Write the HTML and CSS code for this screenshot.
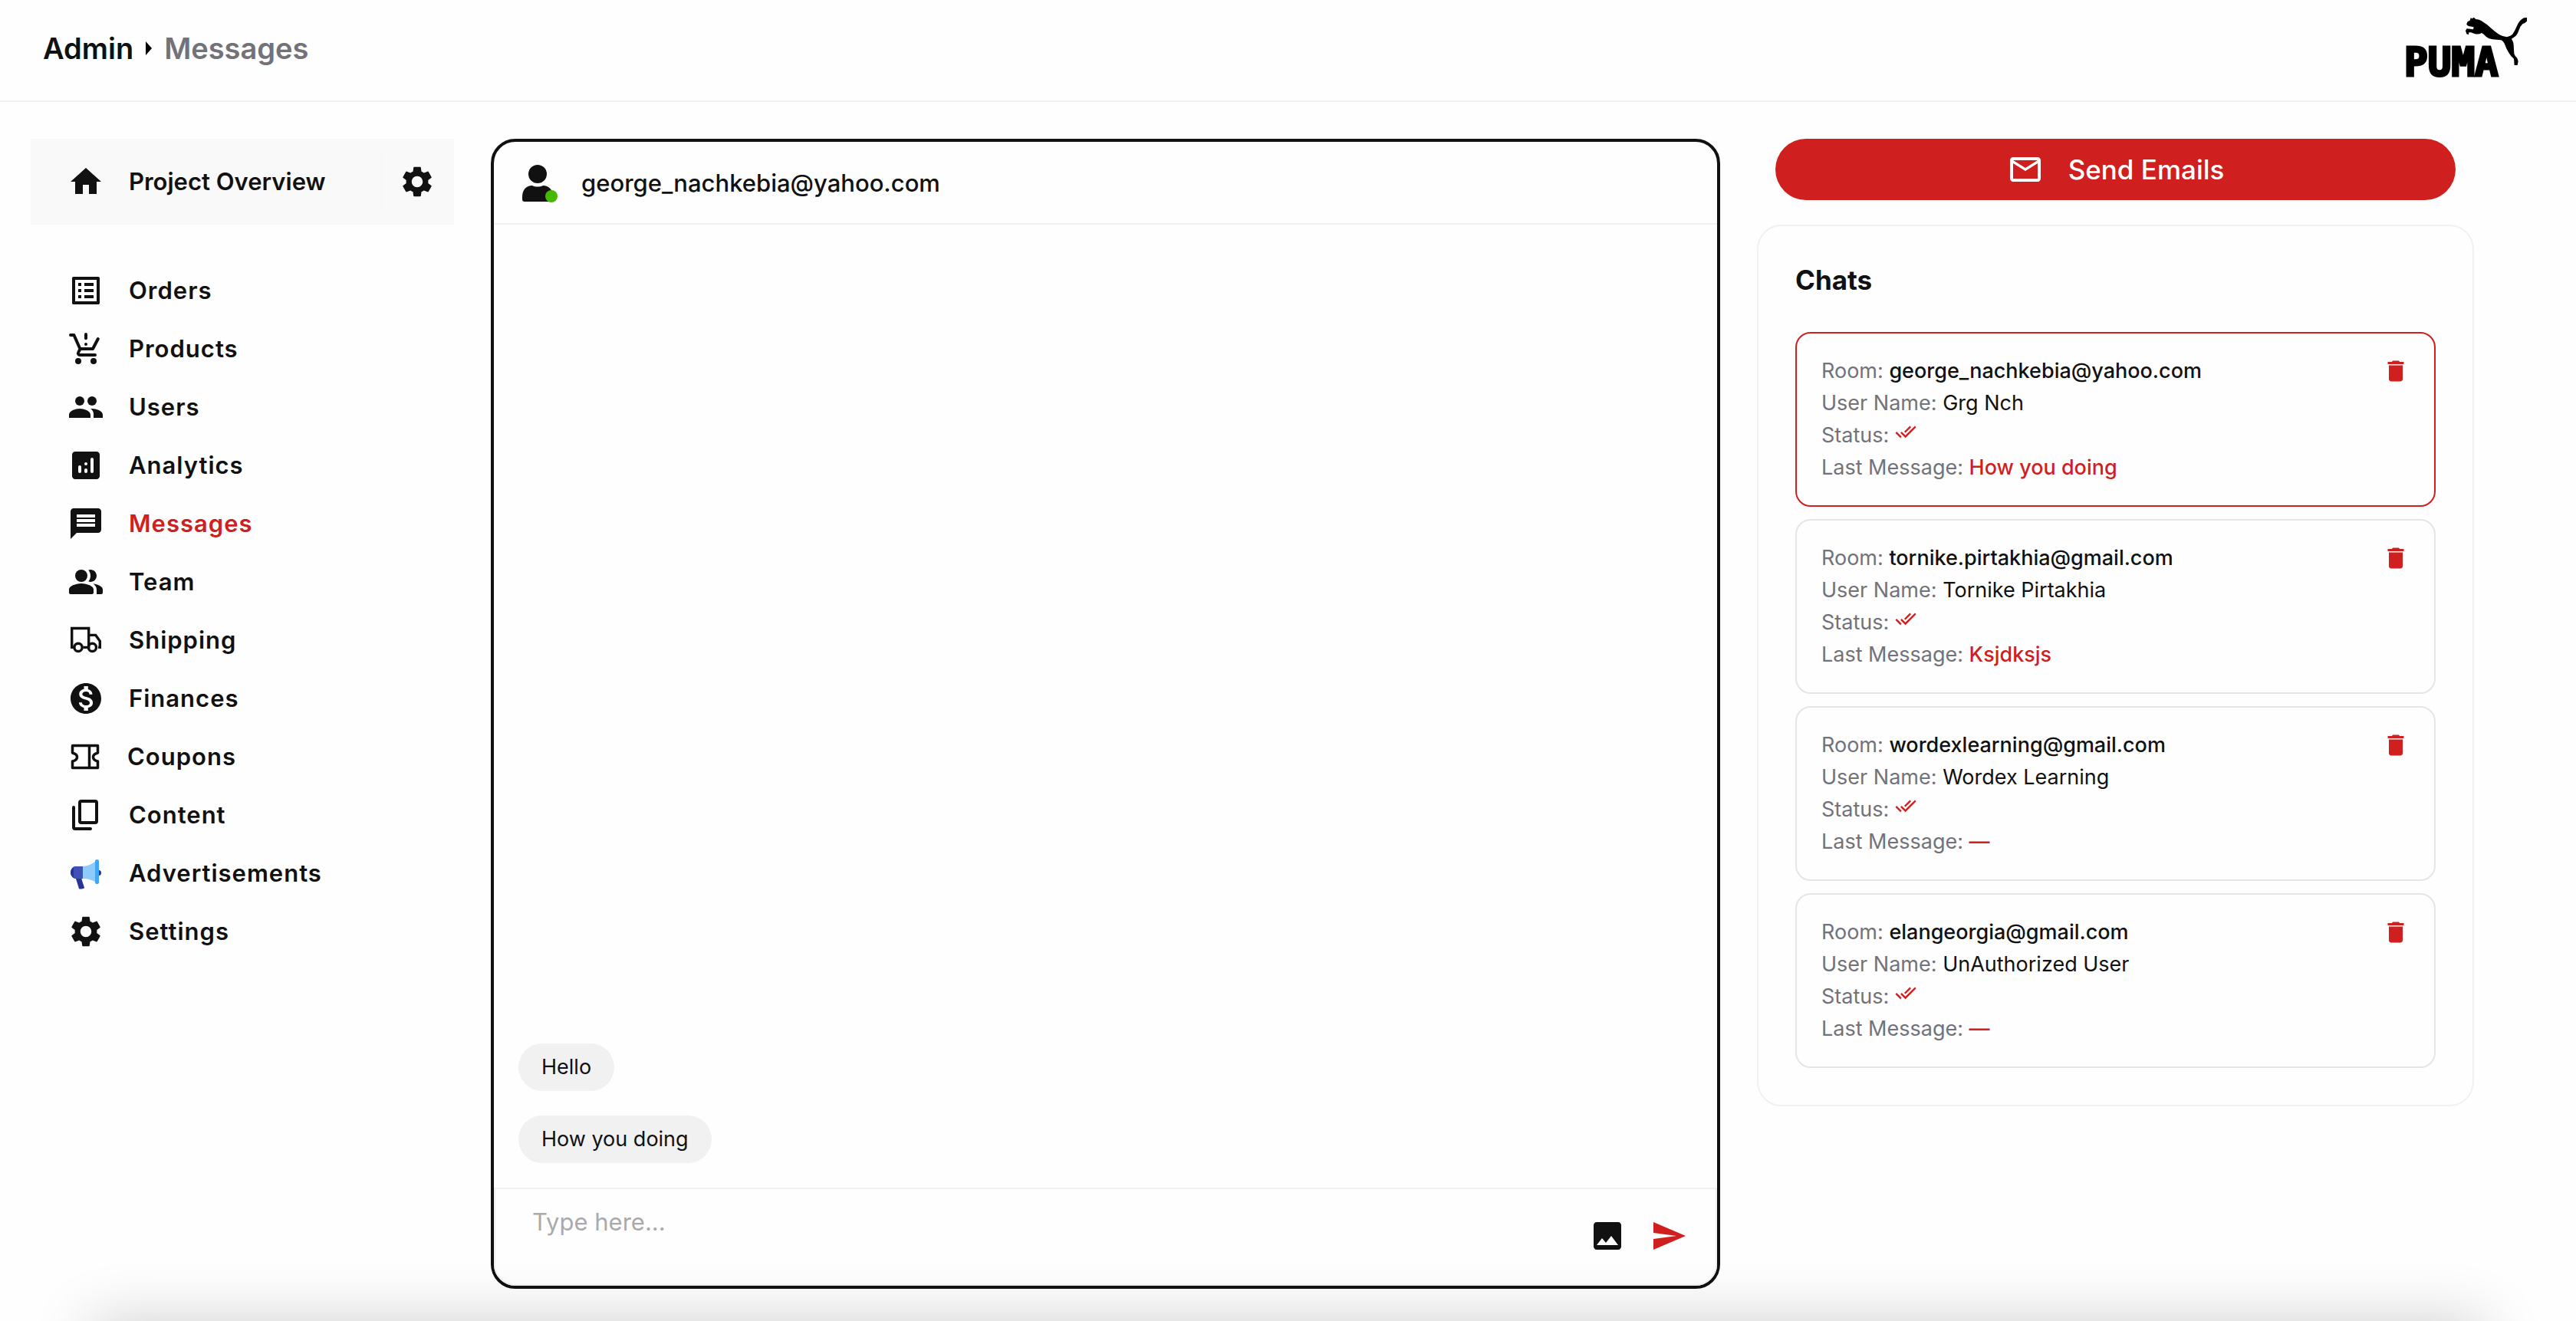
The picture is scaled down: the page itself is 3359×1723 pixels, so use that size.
FILE: index.html
```html
<!DOCTYPE html>
<html lang="en">
<head>
<meta charset="utf-8">
<title>Admin - Messages</title>
<meta name="viewport" content="width=device-width, initial-scale=1">
<link rel="stylesheet" href="styles.css">
</head>
<body>
<svg class="sprite" aria-hidden="true">
  <symbol id="gear" viewBox="0 0 24 24"><path d="M19.14 12.94c.04-.3.06-.61.06-.94 0-.32-.02-.64-.07-.94l2.03-1.58c.18-.14.23-.41.12-.61l-1.92-3.32c-.12-.22-.37-.29-.59-.22l-2.39.96c-.5-.38-1.03-.7-1.62-.94l-.36-2.54c-.04-.24-.24-.41-.48-.41h-3.84c-.24 0-.43.17-.47.41l-.36 2.54c-.59.24-1.13.57-1.62.94l-2.39-.96c-.22-.08-.47 0-.59.22L2.74 8.87c-.12.21-.08.47.12.61l2.03 1.58c-.05.3-.09.63-.09.94s.02.64.07.94l-2.03 1.58c-.18.14-.23.41-.12.61l1.92 3.32c.12.22.37.29.59.22l2.39-.96c.5.38 1.03.7 1.62.94l.36 2.54c.05.24.24.41.48.41h3.84c.24 0 .44-.17.47-.41l.36-2.54c.59-.24 1.13-.56 1.62-.94l2.39.96c.22.08.47 0 .59-.22l1.92-3.32c.12-.22.07-.47-.12-.61l-2.01-1.58zM12 15.6c-1.98 0-3.6-1.62-3.6-3.6s1.62-3.6 3.6-3.6 3.6 1.62 3.6 3.6-1.62 3.6-3.6 3.6z"/></symbol>
  <symbol id="trash" viewBox="0 0 24 24"><path d="M6 19c0 1.1.9 2 2 2h8c1.1 0 2-.9 2-2V7H6v12zM19 4h-3.500l-1-1h-5l-1 1H5v2h14V4z"/></symbol>
  <symbol id="seen" viewBox="0 0 24 24"><path d="M18 7l-1.410-1.410-6.340 6.340 1.410 1.410L18 7zm4.240-1.410L11.660 16.170 7.480 12l-1.410 1.410L11.660 19l12-12-1.420-1.410zM.41 13.410L6 19l1.410-1.410L1.830 12 .41 13.410z"/></symbol>
</svg>

<header class="topbar">
  <nav class="crumbs" aria-label="Breadcrumb">
    <a href="#admin">Admin</a>
    <svg class="caret" viewBox="0 0 8 18" aria-hidden="true"><path d="M0 0l8 9-8 9z"/></svg>
    <span class="crumb-current">Messages</span>
  </nav>
  <a class="brand" href="#home" aria-label="Puma">
    <svg class="logo" viewBox="-6 0 164 94" aria-hidden="true">
      <text class="logo-word" x="-2" y="76">PUMA</text>
      <g transform="translate(63 -8) scale(.3333)">
        <path d="M62 35L65 25L71 28L77 23L85 30Q96 31 105 35Q128 48 150 70Q172 90 190 96L207 100Q222 96 228 90Q238 76 246 56Q254 38 265 30Q274 23 285 24V38Q278 45 268 49Q259 58 254 72Q248 90 240 97L225 107Q232 118 233 130L235 165Q237 174 247 182L251 195L248 210H236L234 185Q222 176 213 160Q204 146 199 130Q193 116 184 112L150 109Q134 107 125 98Q116 88 108 84Q98 90 82 88L66 82H58L57 91L49 88L45 75L50 67L75 70L77 61L60 58Q48 54 49 48L53 40Z"/>
      </g>
    </svg>
  </a>
</header>

<div class="layout">
  <aside class="sidebar">
    <div class="overview">
      <a class="overview-link" href="#overview">
        <svg class="icon" viewBox="0 0 24 24"><path d="M10 20v-6h4v6h5v-8h3L12 3 2 12h3v8z"/></svg>
        <span>Project Overview</span>
      </a>
      <button class="icon-button overview-settings" type="button" aria-label="Project settings"><svg class="icon"><use href="#gear"/></svg></button>
    </div>
    <nav class="menu" aria-label="Main">
      <a href="#orders"><svg class="icon" viewBox="0 0 24 24"><path d="M11 7h6v2h-6zM11 11h6v2h-6zM11 15h6v2h-6zM7 7h2v2H7zM7 11h2v2H7zM7 15h2v2H7z"/><path d="M20.100 3H3.900c-.5 0-.9.4-.9.900v16.200c0 .4.4.900.9.900h16.200c.4 0 .9-.5.9-.9V3.900c0-.5-.5-.9-.9-.9zM19 19H5V5h14v14z"/></svg><span>Orders</span></a>
      <a href="#products"><svg class="icon" viewBox="0 0 24 24"><path d="M12 1.500c.55 0 1 .45 1 1v2.600c0 .55-.45 1-1 1s-1-.45-1-1V2.500c0-.55.45-1 1-1z"/><circle cx="12" cy="9" r="1"/><circle cx="7" cy="20" r="2"/><circle cx="17" cy="20" r="2"/><path d="M2 3h2.200l4 9h8.300l3.400-6.500M8.300 12l-1.200 2.300c-.5.900.1 1.700 1 1.700H18" fill="none" stroke="#111" stroke-width="2" stroke-linecap="round" stroke-linejoin="round"/></svg><span>Products</span></a>
      <a href="#users"><svg class="icon" viewBox="0 0 24 24"><circle cx="8" cy="8" r="3"/><circle cx="16" cy="8" r="3"/><path d="M8 13c-2.700 0-7 1.340-7 4v2h14v-2c0-2.660-4.330-4-7-4zM16 13c-.29 0-.62.02-.97.05C16.190 13.890 17 15.020 17 16.500V19h6v-2c0-2.660-4.330-4-7-4z"/></svg><span>Users</span></a>
      <a href="#analytics"><svg class="icon" viewBox="0 0 24 24"><path fill-rule="evenodd" d="M5 3h14c1.100 0 2 .9 2 2v14c0 1.100-.9 2-2 2H5c-1.100 0-2-.9-2-2V5c0-1.100.9-2 2-2zM8 12a1 1 0 0 0-1 1v3a1 1 0 0 0 2 0v-3a1 1 0 0 0-1-1zM12 10a1 1 0 1 0 0 2 1 1 0 0 0 0-2zM12 14a1 1 0 0 0-1 1v1a1 1 0 0 0 2 0v-1a1 1 0 0 0-1-1zM16 7a1 1 0 0 0-1 1v8a1 1 0 0 0 2 0V8a1 1 0 0 0-1-1z"/></svg><span>Analytics</span></a>
      <a class="active" href="#messages" aria-current="page"><svg class="icon" viewBox="0 0 24 24"><path d="M20 2H4c-1.100 0-2 .9-2 2v18l4-4h14c1.100 0 2-.9 2-2V4c0-1.100-.9-2-2-2zM6 9h12v2H6V9zm12 5H6v-2h12v2zm0-6H6V6h12v2z"/></svg><span>Messages</span></a>
      <a href="#team"><svg class="icon" viewBox="0 0 24 24"><circle cx="9" cy="8" r="4"/><path d="M9 13c-2.670 0-8 1.340-8 4v2c0 .55.45 1 1 1h14c.55 0 1-.45 1-1v-2c0-2.660-5.330-4-8-4zM15 12c2.210 0 4-1.790 4-4s-1.790-4-4-4c-.47 0-.91.1-1.330.24C14.500 5.270 15 6.580 15 8s-.5 2.730-1.330 3.760c.42.14.86.24 1.330.24zM16.670 13.130C18.040 14.060 19 15.320 19 17v3h3c.55 0 1-.45 1-1v-2c0-2.180-3.570-3.470-6.330-3.870z"/></svg><span>Team</span></a>
      <a href="#shipping"><svg class="icon" viewBox="0 0 24 24"><g fill="none" stroke="#111" stroke-width="1.700"><path d="M4 16.700H2.850V4.250h11v12.450H10.200M13.850 8.700h4.500l2.800 4V16.700h-1.100M10.200 16.700h3.700"/><circle cx="7" cy="16.700" r="2.550"/><circle cx="16.200" cy="16.700" r="2.550"/></g></svg><span>Shipping</span></a>
      <a href="#finances"><svg class="icon" viewBox="0 0 24 24"><path d="M12 2C6.480 2 2 6.480 2 12s4.480 10 10 10 10-4.480 10-10S17.520 2 12 2zm1.410 16.090V20h-2.670v-1.930c-1.710-.36-3.160-1.460-3.270-3.400h1.960c.1 1.050.82 1.870 2.650 1.870 1.960 0 2.400-.98 2.400-1.590 0-.83-.44-1.610-2.670-2.140-2.480-.6-4.180-1.620-4.180-3.670 0-1.720 1.390-2.840 3.110-3.210V4h2.670v1.950c1.860.45 2.790 1.860 2.850 3.390H14.300c-.05-1.110-.64-1.870-2.220-1.870-1.500 0-2.400.68-2.400 1.640 0 .84.65 1.390 2.670 1.910s4.180 1.390 4.180 3.910c-.01 1.830-1.380 2.830-3.120 3.160z"/></svg><span>Finances</span></a>
      <a href="#coupons"><svg class="icon icon-ticket" viewBox="0 0 46 48"><g fill="none" stroke="#111" stroke-width="3.500" stroke-linejoin="round"><path d="M6.500 9.500h33v9.500c-4 1-6 3-6 5.500s2 4.500 6 5.500v8.500h-33V30c4-1 6-3 6-5.500S10.500 20 6.500 19zM28.500 9.500v29"/></g></svg><span>Coupons</span></a>
      <a href="#content"><svg class="icon" viewBox="0 0 24 24"><g fill="none" stroke="#111" stroke-width="2" stroke-linecap="round" stroke-linejoin="round"><rect x="8" y="3" width="11" height="14" rx="1"/><path d="M4 7v13c0 .55.45 1 1 1h10"/></g></svg><span>Content</span></a>
      <a href="#advertisements"><svg class="icon" viewBox="0 0 48 48"><path fill="#283593" d="M41 20c2 0 3 1.500 3 3.500S43 27 41 27z"/><path fill="#283593" d="M10 28l5 16c.5 1.200 7.500.2 7-1.300L18.500 32c0-2 1-1 1-3z"/><path fill="#90caf9" d="M19 34v-3c8 0 13 1.500 18 5V8c-5 4-11 7-18 7v16z"/><path fill="#3f51b5" d="M9 15h11v16H9c-3-2-5-4.500-5-8s2-6 5-8z"/><path fill="#283593" d="M8 15.800C5.500 17.500 4 20 4 23s1.500 5.500 4 7.200z"/><path fill="#42a5f5" d="M36 8c0-2.700 5-2.700 5 0v28c0 2.700-5 2.700-5 0z"/></svg><span>Advertisements</span></a>
      <a href="#settings"><svg class="icon"><use href="#gear"/></svg><span>Settings</span></a>
    </nav>
  </aside>

  <main class="chat">
    <div class="chat-head">
      <span class="avatar">
        <svg viewBox="0 0 48 48" aria-hidden="true"><circle cx="21" cy="12" r="12"/><path d="M14 27c4 2 10 2 14 0 8 0 13 6 13 15v3c0 2-1 3-3 3H4c-2 0-3-1-3-3v-3c0-9 5-15 13-15z"/></svg>
        <span class="online"></span>
      </span>
      <h1>george_nachkebia@yahoo.com</h1>
    </div>
    <div class="thread">
      <p class="bubble">Hello</p>
      <p class="bubble">How you doing</p>
    </div>
    <form class="composer">
      <textarea aria-label="Message" placeholder="Type here..." rows="2"></textarea>
      <button class="icon-button" type="button" aria-label="Attach image"><svg class="icon" viewBox="0 0 24 24"><path d="M21 19V5c0-1.100-.9-2-2-2H5c-1.100 0-2 .9-2 2v14c0 1.100.9 2 2 2h14c1.100 0 2-.9 2-2zM8.500 13.500l2.500 3.010L14.500 12l4.500 6H5l3.500-4.500z"/></svg></button>
      <button class="icon-button send" type="submit" aria-label="Send"><svg class="icon" viewBox="0 0 24 24"><path d="M2.010 21L23 12 2.010 3 2 10l15 2-15 2z"/></svg></button>
    </form>
  </main>

  <section class="side">
    <button class="send-emails" type="button">
      <svg class="icon" viewBox="0 0 24 24"><path d="M22 6c0-1.100-.9-2-2-2H4c-1.100 0-2 .9-2 2v12c0 1.100.9 2 2 2h16c1.100 0 2-.9 2-2V6zm-2 0l-8 5-8-5h16zm0 12H4V8l8 5 8-5v10z"/></svg>
      <span>Send Emails</span>
    </button>
    <div class="chats">
      <h2>Chats</h2>
      <ul class="rooms">
        <li class="room selected">
          <div class="room-info">
            <p>Room: <strong>george_nachkebia@yahoo.com</strong></p>
            <p>User Name: <span class="name">Grg Nch</span></p>
            <p>Status: <svg class="seen"><use href="#seen"/></svg></p>
            <p>Last Message: <span class="last">How you doing</span></p>
          </div>
          <button class="icon-button" type="button" aria-label="Delete chat"><svg class="trash"><use href="#trash"/></svg></button>
        </li>
        <li class="room">
          <div class="room-info">
            <p>Room: <strong>tornike.pirtakhia@gmail.com</strong></p>
            <p>User Name: <span class="name">Tornike Pirtakhia</span></p>
            <p>Status: <svg class="seen"><use href="#seen"/></svg></p>
            <p>Last Message: <span class="last">Ksjdksjs</span></p>
          </div>
          <button class="icon-button" type="button" aria-label="Delete chat"><svg class="trash"><use href="#trash"/></svg></button>
        </li>
        <li class="room">
          <div class="room-info">
            <p>Room: <strong>wordexlearning@gmail.com</strong></p>
            <p>User Name: <span class="name">Wordex Learning</span></p>
            <p>Status: <svg class="seen"><use href="#seen"/></svg></p>
            <p>Last Message: <span class="last">—</span></p>
          </div>
          <button class="icon-button" type="button" aria-label="Delete chat"><svg class="trash"><use href="#trash"/></svg></button>
        </li>
        <li class="room">
          <div class="room-info">
            <p>Room: <strong>elangeorgia@gmail.com</strong></p>
            <p>User Name: <span class="name">UnAuthorized User</span></p>
            <p>Status: <svg class="seen"><use href="#seen"/></svg></p>
            <p>Last Message: <span class="last">—</span></p>
          </div>
          <button class="icon-button" type="button" aria-label="Delete chat"><svg class="trash"><use href="#trash"/></svg></button>
        </li>
      </ul>
    </div>
  </section>
</div>
<div class="page-shadow" aria-hidden="true"></div>
</body>
</html>
```
FILE: styles.css
```css
* {
  box-sizing: border-box;
}

body,
h1,
h2,
p,
ul {
  margin: 0;
  padding: 0;
}

body {
  font-family: Inter, "Liberation Sans", sans-serif;
  font-size: 27px;
  color: #111;
  background: #fefefe;
}

a {
  color: inherit;
  text-decoration: none;
}

ul {
  list-style: none;
}

.sprite {
  display: none;
}

.icon {
  flex: none;
  display: block;
  width: 48px;
  height: 48px;
  fill: #111;
}

.icon-ticket {
  width: 46px;
}

.icon-button {
  flex: none;
  padding: 0;
  border: 0;
  background: none;
  cursor: pointer;
}

/* Top bar */
.topbar {
  display: flex;
  justify-content: space-between;
  align-items: flex-start;
  padding: 23px 64px 14px 56px;
  border-bottom: 2px solid #f1f1f1;
}

.crumbs {
  display: flex;
  align-items: center;
  gap: 16px;
  padding-top: 16px;
  font-size: 38px;
  line-height: 48px;
  font-weight: 600;
}

.caret {
  width: 8px;
  height: 18px;
}

.crumb-current {
  color: #727278;
}

.brand {
  display: block;
}

.logo {
  display: block;
  width: 164px;
  height: 94px;
}

.logo-word {
  font-family: "DejaVu Sans Mono", monospace;
  font-size: 51px;
  font-weight: 700;
  stroke: #000;
  stroke-width: 3px;
}

/* Page columns */
.layout {
  display: grid;
  grid-template-columns: 552px 1603fr 935fr;
  gap: 48px;
  align-items: start;
  padding: 48px 133px 42px 40px;
}

/* Sidebar */
.sidebar {
  display: grid;
  gap: 62px;
}

.overview {
  display: flex;
  align-items: center;
  justify-content: space-between;
  padding: 16px 24px 16px 48px;
  background: #f9f9f9;
}

.overview-link,
.menu a {
  display: flex;
  align-items: center;
  gap: 32px;
  font-size: 31px;
  line-height: 48px;
  font-weight: 600;
}

.overview-settings {
  padding: 16px 0 16px 22px;
  border-left: 1px solid #f6f6f6;
}

.menu {
  display: grid;
  gap: 28px;
  padding-left: 48px;
}

.menu a {
  letter-spacing: 1px;
}

.menu a.active {
  color: #cf1f1f;
}

/* Chat window */
.chat {
  display: grid;
  grid-template-rows: auto 1fr auto;
  min-height: 1500px;
  border: 4px solid #111;
  border-radius: 32px;
}

.chat-head {
  display: flex;
  align-items: center;
  gap: 28px;
  padding: 30px 36px 28px;
  border-bottom: 2px solid #f1f1f1;
}

.avatar {
  position: relative;
  display: block;
  width: 50px;
  height: 48px;
}

.avatar svg {
  display: block;
  width: 48px;
  height: 48px;
  fill: #111;
}

.online {
  position: absolute;
  right: 3px;
  bottom: -1px;
  width: 16px;
  height: 16px;
  border-radius: 50%;
  background: #46b800;
}

.chat-head h1 {
  font-size: 31px;
  line-height: 48px;
  font-weight: 500;
}

.thread {
  display: flex;
  flex-direction: column;
  justify-content: flex-end;
  align-items: flex-start;
  gap: 32px;
  padding: 32px;
}

.bubble {
  padding: 10px 30px;
  line-height: 42px;
  border-radius: 31px;
  background: #f1f1f1;
}

.composer {
  display: flex;
  align-items: center;
  gap: 32px;
  min-height: 128px;
  padding: 18px 37px 20px 48px;
  border: 2px solid #f1f1f1;
  border-radius: 0 0 28px 28px;
}

.composer textarea {
  flex: 1;
  height: 84px;
  padding: 0;
  border: 0;
  outline: 0;
  resize: none;
  background: none;
  color: #111;
  font: 400 31px/48px Inter, "Liberation Sans", sans-serif;
}

.composer textarea::placeholder {
  color: #aaa;
}

.send .icon {
  fill: #cf1f1f;
}

/* Right column */
.side {
  display: grid;
  gap: 32px;
}

.send-emails {
  display: flex;
  align-items: center;
  justify-content: center;
  gap: 32px;
  margin: 0 24px;
  padding: 16px;
  border: 0;
  border-radius: 40px;
  background: #cf1f1f;
  color: #fff;
  font: 500 35px/48px Inter, "Liberation Sans", sans-serif;
  cursor: pointer;
}

.send-emails .icon {
  fill: #fff;
}

.chats {
  padding: 48px;
  border: 2px solid #f1f1f1;
  border-radius: 32px;
}

.chats h2 {
  margin-bottom: 46px;
  font-size: 35px;
  line-height: 44px;
  font-weight: 700;
}

.rooms {
  display: grid;
  gap: 16px;
}

.room {
  display: flex;
  justify-content: space-between;
  align-items: flex-start;
  padding: 28px 32px;
  border: 2px solid #e5e5e5;
  border-radius: 20px;
}

.room.selected {
  border-color: #cf1f1f;
}

.room p {
  height: 42px;
  line-height: 42px;
  color: #727278;
}

.room strong,
.name,
.last {
  font-weight: 500;
  color: #111;
}

.name {
  font-weight: 400;
}

.room .last {
  color: #cf1f1f;
}

.seen {
  width: 28px;
  height: 28px;
  fill: #cf1f1f;
}

.trash {
  display: block;
  width: 36px;
  height: 42px;
  fill: #cf1f1f;
}

/* Soft shade that rises from below the window */
.page-shadow {
  position: fixed;
  left: 120px;
  right: 120px;
  top: 100%;
  height: 100px;
  box-shadow: 0 0 80px rgba(0, 0, 0, 0.19);
  pointer-events: none;
}
```
